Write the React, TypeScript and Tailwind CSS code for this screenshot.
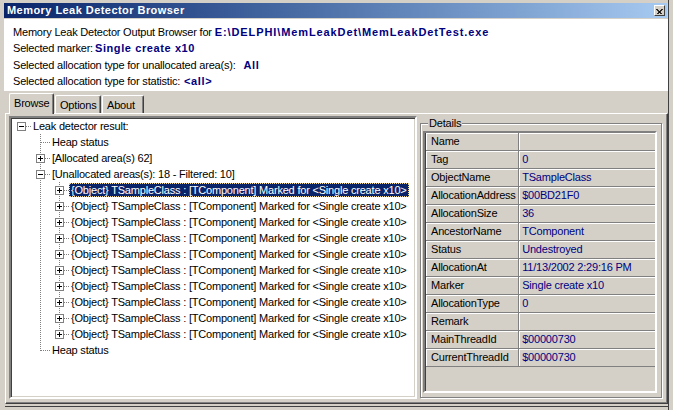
import React from "react";

type CellKind = "none" | "pipe" | "tee" | "elbow" | "rootH";

function TreeCell({ kind, box }: { kind: CellKind; box?: "+" | "-" }) {
  return (
    <svg width="19" height="16" className="shrink-0 block" shapeRendering="crispEdges">
      {(kind === "pipe" || kind === "tee") && (
        <line x1="9.5" y1="0" x2="9.5" y2="16" stroke="#808080" strokeDasharray="1 1" />
      )}
      {kind === "elbow" && (
        <line x1="9.5" y1="0" x2="9.5" y2="9" stroke="#808080" strokeDasharray="1 1" />
      )}
      {(kind === "tee" || kind === "elbow" || kind === "rootH") && (
        <line x1="10" y1="8.5" x2="19" y2="8.5" stroke="#808080" strokeDasharray="1 1" />
      )}
      {box && (
        <g>
          <rect x="5.5" y="4.5" width="8" height="8" fill="#ffffff" stroke="#808080" />
          <line x1="7" y1="8.5" x2="12" y2="8.5" stroke="#000000" />
          {box === "+" && <line x1="9.5" y1="6" x2="9.5" y2="11" stroke="#000000" />}
        </g>
      )}
    </svg>
  );
}

type Row = { cells: CellKind[]; box?: "+" | "-"; text: string; selected?: boolean };

const OBJ = "{Object} TSampleClass : [TComponent] Marked for <Single create x10>";

const rows: Row[] = [
  { cells: ["rootH"], box: "-", text: "Leak detector result:" },
  { cells: ["none", "tee"], text: "Heap status" },
  { cells: ["none", "tee"], box: "+", text: "[Allocated area(s) 62]" },
  { cells: ["none", "tee"], box: "-", text: "[Unallocated areas(s): 18 - Filtered: 10]" },
  ...Array.from({ length: 10 }, (_, i) => ({
    cells: ["none", "pipe", i === 9 ? "elbow" : "tee"] as CellKind[],
    box: "+" as const,
    text: OBJ,
    selected: i === 0,
  })),
  { cells: ["none", "elbow"], text: "Heap status" },
];

const details: [string, string][] = [
  ["Name", ""],
  ["Tag", "0"],
  ["ObjectName", "TSampleClass"],
  ["AllocationAddress", "$00BD21F0"],
  ["AllocationSize", "36"],
  ["AncestorName", "TComponent"],
  ["Status", "Undestroyed"],
  ["AllocationAt", "11/13/2002 2:29:16 PM"],
  ["Marker", "Single create x10"],
  ["AllocationType", "0"],
  ["Remark", ""],
  ["MainThreadId", "$00000730"],
  ["CurrentThreadId", "$00000730"],
];

function CloseButton() {
  return (
    <div className="w-[11px] h-[11px] bg-[#d4d0c8] border-t border-l border-white border-r border-b border-r-[#404040] border-b-[#404040] flex items-center justify-center">
      <svg width="7" height="6" shapeRendering="crispEdges">
        <path d="M0.5 0.5 L6 6 M1.5 0.5 L6.5 5.5 M6.5 0.5 L1 6 M5.5 0.5 L0 6" stroke="#000" strokeWidth="0.8" />
      </svg>
    </div>
  );
}

export default function App() {
  return (
    <div className="w-[673px] h-[410px] bg-[#d4d0c8] overflow-hidden font-['Liberation_Sans',Arial,sans-serif] text-[11px] tracking-[-0.2px] text-black">
      <div className="ml-[4px] w-[665px] h-full border-r border-[#404040] pt-[3px] flex flex-col">
        {/* Title bar */}
        <div className="h-[15px] mr-[1px] bg-linear-to-r from-[#0a246a] to-[#a6caf0] flex items-center justify-between pl-[3px] pr-[2px]">
          <span className="text-white font-bold text-[11px] tracking-[0.45px] leading-[15px]">
            Memory Leak Detector Browser
          </span>
          <CloseButton />
        </div>
        <div className="h-[1px]" />
        {/* Header */}
        <div className="bg-white h-[72px] pt-[5px] pl-[9px] leading-[16px]">
          <div className="h-[16px] whitespace-nowrap">
            Memory Leak Detector Output Browser for{" "}
            <span className="font-bold text-[#000080] tracking-[0.9px]">E:\DELPHI\MemLeakDet\MemLeakDetTest.exe</span>
          </div>
          <div className="h-[17px] leading-[17px] whitespace-nowrap">
            Selected marker:
            <span className="font-bold text-[#000080] tracking-[0.6px] ml-[2px]">Single create x10</span>
          </div>
          <div className="h-[16px] whitespace-nowrap">
            Selected allocation type for unallocated area(s):
            <span className="font-bold text-[#000080] tracking-[0.6px] ml-[8px]">All</span>
          </div>
          <div className="h-[16px] whitespace-nowrap">
            Selected allocation type for statistic:
            <span className="font-bold text-[#000080] tracking-[0.6px] ml-[4px]">&lt;all&gt;</span>
          </div>
        </div>
        {/* Page control */}
        <div className="flex-1 flex flex-col pt-[2px] pl-[1px]">
          {/* Tabs */}
          <div className="h-[20px] flex items-end pl-[4px] relative z-10">
            <div className="h-[21px] w-[45px] -mb-[1px] bg-[#d4d0c8] border-l border-t border-white border-r border-r-[#404040] rounded-t-[2px] pl-[4px] pt-[1px] leading-[16px] shadow-[inset_-1px_0_0_#808080]">
              Browse
            </div>
            <div className="h-[18px] w-[46px] ml-[1px] border-l border-t border-white border-r border-r-[#404040] rounded-t-[2px] pl-[4px] pt-[1px] leading-[16px] shadow-[inset_-1px_0_0_#808080]">
              Options
            </div>
            <div className="h-[18px] w-[42px] ml-[1px] border-l border-t border-white border-r border-r-[#404040] rounded-t-[2px] pl-[4px] pt-[1px] leading-[16px] shadow-[inset_-1px_0_0_#808080]">
              About
            </div>
          </div>
          {/* Panel */}
          <div className="h-[291px] border-l border-t border-white border-r border-b border-r-[#404040] border-b-[#404040] shadow-[inset_-1px_-1px_0_#808080] flex pt-[2px] pl-[3px] gap-[3px]">
            {/* Tree */}
            <div className="w-[408px] h-[283px] bg-white border-2 border-t-[#808080] border-l-[#808080] border-r-white border-b-white shadow-[inset_1px_1px_0_#404040,inset_-1px_-1px_0_#d4d0c8] pl-[1px]">
              {rows.map((r, i) => (
                <div key={i} className="h-[16px] flex items-center">
                  {r.cells.map((c, j) => (
                    <TreeCell key={j} kind={c} box={j === r.cells.length - 1 ? r.box : undefined} />
                  ))}
                  <span
                    className={
                      "h-[14px] leading-[14px] px-[2px] whitespace-nowrap " +
                      (r.selected
                        ? "bg-[#0a246a] text-white outline-1 outline-dotted outline-[#f5db95] -outline-offset-1"
                        : "")
                    }
                  >
                    {r.text}
                  </span>
                </div>
              ))}
            </div>
            {/* Details */}
            <div className="w-[242px] h-[275px] mt-[7px] border border-[#808080] shadow-[inset_1px_1px_0_#fff,1px_1px_0_#fff] relative px-[2px] pt-[7px]">
              <span className="absolute -top-[7px] left-[7px] bg-[#d4d0c8] px-[1px] leading-[13px]">Details</span>
              <div className="w-[234px] h-[262px] border-2 border-t-[#808080] border-l-[#808080] border-r-white border-b-white shadow-[inset_1px_1px_0_#404040,inset_-1px_-1px_0_#d4d0c8] pl-[1px]">
                {details.map(([k, v], i) => (
                  <div key={i} className="h-[18px] flex">
                    <div className="w-[94px] h-[18px] border-b border-r border-[#808080] shadow-[inset_1px_1px_0_#fff] pl-[5px] leading-[17px] whitespace-nowrap">
                      {k}
                    </div>
                    <div className="w-[137px] h-[18px] border-b border-[#808080] shadow-[inset_1px_1px_0_#fff] pl-[3px] leading-[17px] text-[#000080] whitespace-nowrap">
                      {v}
                    </div>
                  </div>
                ))}
              </div>
            </div>
          </div>
          <div className="h-[2px]" />
          <div className="h-[1px] bg-[#404040]" />
        </div>
      </div>
    </div>
  );
}
